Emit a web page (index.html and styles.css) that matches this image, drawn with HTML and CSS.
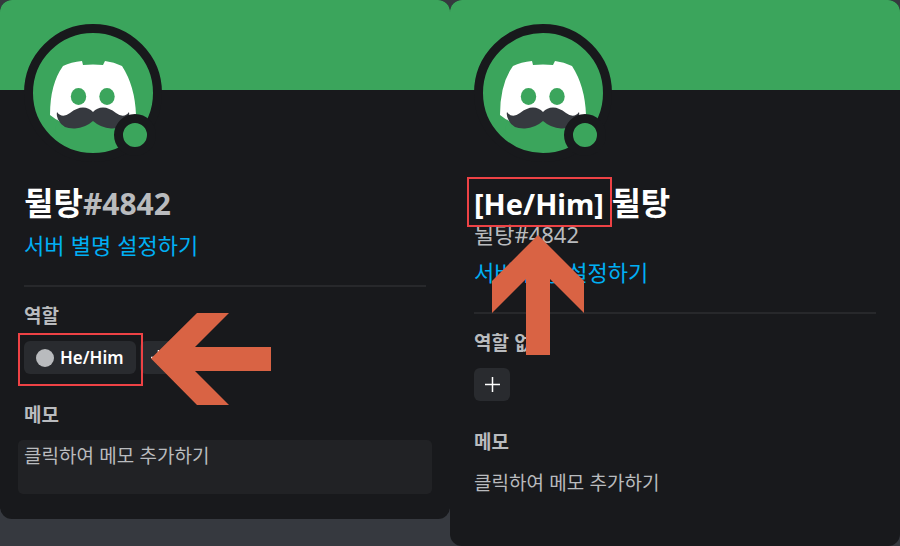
FILE: index.html
```html
<!DOCTYPE html>
<html lang="ko">
<head>
    <meta charset="UTF-8">
    <meta name="viewport" content="width=device-width, initial-scale=1.0">
    <title>뒬탕#4842</title>
    <link rel="stylesheet" href="styles.css">
</head>
<body>

    <!-- Shared avatar drawing -->
    <svg width="0" height="0" class="defs" aria-hidden="true">
        <symbol id="avatar" viewBox="0 0 120 120">
            <path fill="#fff" d="M30 33 Q38 29 49 28 L50 32 Q60 31 70 32 L72 28 Q81 29 89 33 Q102 53 103 82 Q94 90 82 93 L38 93 Q27 90 17 82 Q17 51 30 33Z"/>
            <ellipse cx="45.500" cy="63.500" rx="7.700" ry="8.500" fill="#3ba55c"/>
            <ellipse cx="74" cy="63.500" rx="7.700" ry="8.500" fill="#3ba55c"/>
            <path fill="#3ba55c" d="M24 86 Q26 95 36 97 H84 Q94 94 96 84 L98 100 H22Z"/>
            <path fill="#3ba55c" d="M42 95 Q52 94 60 87 Q68 94 78 95 V98 H42Z"/>
            <path fill="#36393f" d="M60 79 Q56 74.500 50 74.500 Q44 74.500 37 80 Q29 86 24 79 Q23 83 26 88 Q30 96 42 95.500 Q52 95 60 88 Q68 95 78 95.500 Q90 96 94 88 Q97 83 96 79 Q91 86 83 80 Q76 74.500 70 74.500 Q64 74.500 60 79Z"/>
        </symbol>
    </svg>

    <main class="profiles">
        <section class="card">
            <div class="banner"></div>
            <div class="content">
                <div class="avatar">
                    <svg role="img" aria-label="뒬탕"><use href="#avatar"/></svg>
                    <span class="status"></span>
                </div>
                <h1 class="name">뒬탕<span class="number">#4842</span></h1>
                <a class="nickname" href="#">서버 별명 설정하기</a>
                <hr>
                <h2>역할</h2>
                <div class="roles">
                    <button type="button" class="role"><span class="dot"></span>He/Him</button>
                    <button type="button" class="role add" aria-label="역할 추가">
                        <svg width="15" height="15" viewBox="0 0 15 15"><path d="M7.500 0V15M0 7.500H15"/></svg>
                    </button>
                </div>
                <h2><label for="memo1">메모</label></h2>
                <textarea id="memo1" class="memo active" placeholder="클릭하여 메모 추가하기"></textarea>
            </div>

            <!-- Highlight on the role -->
            <div class="mark mark-role"></div>
            <svg class="arrow arrow-left" width="120" height="92" viewBox="0 0 120 92">
                <path d="M0 45.500 L46 0 H78 L44 34 H120 V58 H44 L78 92 H46Z"/>
            </svg>
        </section>

        <section class="card">
            <div class="banner"></div>
            <div class="content">
                <div class="avatar">
                    <svg role="img" aria-label="뒬탕"><use href="#avatar"/></svg>
                    <span class="status"></span>
                </div>
                <h1 class="name"><span class="pronoun">[He/Him] </span>뒬탕</h1>
                <div class="tag">뒬탕#4842</div>
                <a class="nickname" href="#">서버 별명 설정하기</a>
                <hr>
                <h2>역할 없음</h2>
                <div class="roles">
                    <button type="button" class="role add" aria-label="역할 추가">
                        <svg width="15" height="15" viewBox="0 0 15 15"><path d="M7.500 0V15M0 7.500H15"/></svg>
                    </button>
                </div>
                <h2><label for="memo2">메모</label></h2>
                <textarea id="memo2" class="memo" placeholder="클릭하여 메모 추가하기"></textarea>
            </div>

            <!-- Highlight on the name -->
            <div class="mark mark-name"></div>
            <svg class="arrow arrow-up" width="92" height="120" viewBox="0 0 92 120">
                <path d="M46 0 L92 46 V78 L58 44 V120 H34 V44 L0 78 V46Z"/>
            </svg>
        </section>
    </main>

</body>
</html>
```
FILE: styles.css
```css
* {
    box-sizing: border-box;
}

body {
    margin: 0;
    background-color: #36393f;
    color: #b9bbbe;
    font-family: "Noto Sans CJK KR", "Noto Sans", sans-serif;
    font-size: 19px;
}

.defs {
    position: absolute;
}

.profiles {
    display: flex;
    align-items: flex-start;
}

.card {
    position: relative;
    flex: 1;
    min-width: 0;
    border-radius: 12px;
    background-color: #18191c;
    overflow: hidden;
}

.banner {
    height: 90px;
    background-color: #3ba55c;
}

.content {
    padding: 0 24px 25px;
}

/* Avatar */
.avatar {
    position: relative;
    width: 138px;
    height: 138px;
    margin-top: -66px;
    margin-bottom: 23px;
    border: 9px solid #18191c;
    border-radius: 50%;
    background-color: #3ba55c;
}

.avatar svg {
    display: block;
    width: 120px;
    height: 120px;
}

.status {
    position: absolute;
    right: -3px;
    bottom: -3px;
    width: 42px;
    height: 42px;
    border: 9px solid #18191c;
    border-radius: 50%;
    background-color: #3ba55c;
}

/* Names */
.name,
.tag {
    font-family: "Noto Sans", "Noto Sans CJK KR", sans-serif;
}

.name {
    height: 36px;
    margin: 0;
    color: #fff;
    font-size: 32px;
    font-weight: 700;
    line-height: 36px;
}

.pronoun {
    font-size: 29px;
}

.number {
    color: #b9bbbe;
    font-size: 30px;
}

.tag {
    font-size: 22px;
    line-height: 27px;
}

.nickname {
    display: block;
    margin-top: 10px;
    color: #00aff4;
    font-size: 22px;
    line-height: 27px;
    text-decoration: none;
}

hr {
    height: 2px;
    margin: 27px 0 16px;
    border: none;
    background-color: #27282b;
}

h2 {
    margin: 0 0 14px;
    font-size: 19px;
    font-weight: 700;
    line-height: 24px;
}

/* Roles */
.roles {
    display: flex;
    gap: 4px;
    margin-bottom: 28px;
}

.role {
    display: flex;
    align-items: center;
    gap: 6px;
    height: 33px;
    padding: 0 12px;
    border: none;
    border-radius: 6px;
    background-color: #292b2f;
    color: #fff;
    font-family: "Noto Sans", sans-serif;
    font-size: 17px;
    font-weight: 600;
    line-height: 22px;
    cursor: pointer;
}

.dot {
    width: 18px;
    height: 18px;
    border-radius: 50%;
    background-color: #b9bbbe;
}

.add {
    width: 36px;
    padding: 0 11px;
}

.add svg {
    flex: none;
}

.add path {
    stroke: #fff;
    stroke-width: 1.5;
}

/* Memo */
.memo {
    display: block;
    width: calc(100% + 12px);
    height: 54px;
    margin: 0 -6px;
    padding: 3px 6px;
    border: none;
    border-radius: 5px;
    outline: none;
    background-color: transparent;
    color: #b9bbbe;
    font-family: inherit;
    font-size: 19px;
    line-height: 24px;
    resize: none;
}

.memo::placeholder {
    color: #b9bbbe;
}

.active {
    background-color: #212225;
}

/* Highlights */
.mark {
    position: absolute;
    border: 2px solid #ed4245;
}

.mark-role {
    top: 333px;
    left: 18px;
    width: 125px;
    height: 53px;
}

.mark-name {
    top: 177px;
    left: 17px;
    width: 145px;
    height: 50px;
}

.arrow {
    position: absolute;
    fill: #d96344;
}

.arrow-left {
    top: 313px;
    left: 151px;
}

.arrow-up {
    top: 235px;
    left: 42px;
}
```
